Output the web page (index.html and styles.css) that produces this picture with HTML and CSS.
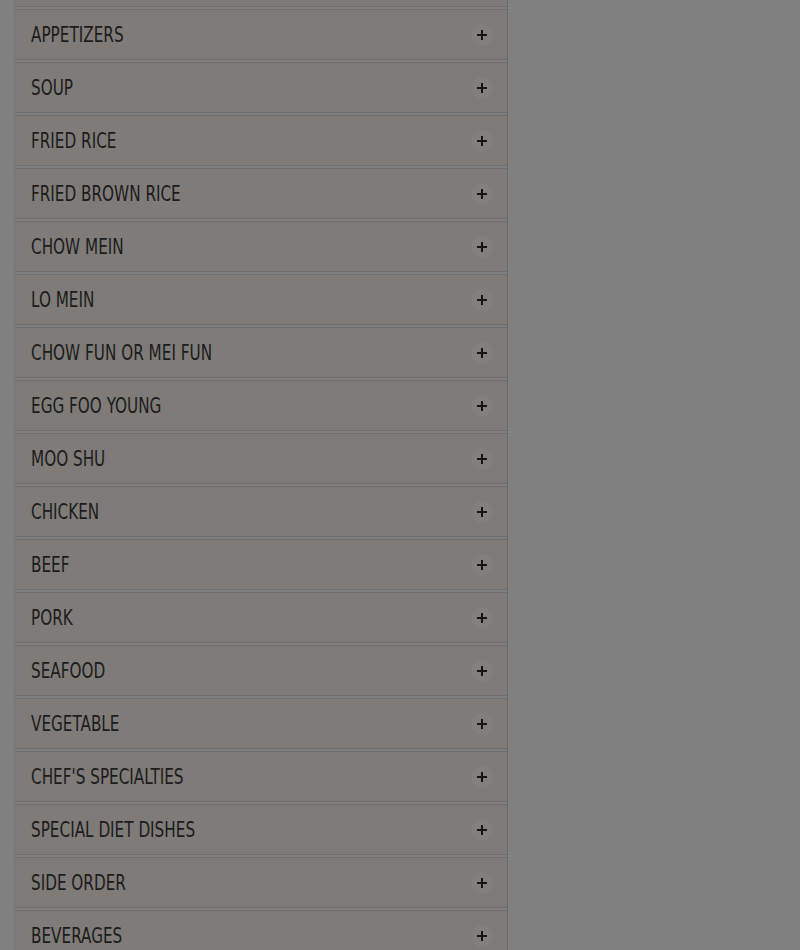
FILE: index.html
```html
<!DOCTYPE html>
<html>
<head>
<meta charset="utf-8">
<link rel="stylesheet" href="styles.css">
</head>
<body>
<div class="panel">
  <ul class="menu">
    <li class="item"><span class="label"></span><span class="plus"></span></li>
    <li class="item"><span class="label">APPETIZERS</span><span class="plus"></span></li>
    <li class="item"><span class="label">SOUP</span><span class="plus"></span></li>
    <li class="item"><span class="label">FRIED RICE</span><span class="plus"></span></li>
    <li class="item"><span class="label">FRIED BROWN RICE</span><span class="plus"></span></li>
    <li class="item"><span class="label">CHOW MEIN</span><span class="plus"></span></li>
    <li class="item"><span class="label">LO MEIN</span><span class="plus"></span></li>
    <li class="item"><span class="label">CHOW FUN OR MEI FUN</span><span class="plus"></span></li>
    <li class="item"><span class="label">EGG FOO YOUNG</span><span class="plus"></span></li>
    <li class="item"><span class="label">MOO SHU</span><span class="plus"></span></li>
    <li class="item"><span class="label">CHICKEN</span><span class="plus"></span></li>
    <li class="item"><span class="label">BEEF</span><span class="plus"></span></li>
    <li class="item"><span class="label">PORK</span><span class="plus"></span></li>
    <li class="item"><span class="label">SEAFOOD</span><span class="plus"></span></li>
    <li class="item"><span class="label">VEGETABLE</span><span class="plus"></span></li>
    <li class="item"><span class="label">CHEF'S SPECIALTIES</span><span class="plus"></span></li>
    <li class="item"><span class="label">SPECIAL DIET DISHES</span><span class="plus"></span></li>
    <li class="item"><span class="label">SIDE ORDER</span><span class="plus"></span></li>
    <li class="item"><span class="label">BEVERAGES</span><span class="plus"></span></li>
  </ul>
</div>
</body>
</html>
```
FILE: styles.css
```css
html, body {
  margin: 0;
  padding: 0;
  background: #808080;
  height: 950px;
  overflow: hidden;
}
.panel {
  margin-left: 14px;
  width: 492px;
  border-left: 1px solid #767676;
  border-right: 1px solid #6c6c6c;
  min-height: 1100px;
}
.menu {
  list-style: none;
  margin: -44px 0 0 0;
  padding: 0;
  display: flex;
  flex-direction: column;
  gap: 2px;
}
.item {
  box-sizing: border-box;
  height: 51px;
  background: #7e7b78;
  border-top: 1px solid #6f6f6f;
  border-bottom: 1px solid #6f6f6f;
  display: flex;
  align-items: center;
  justify-content: space-between;
  padding: 0 14px 0 16px;
}
.label {
  font-family: "DejaVu Sans Condensed", "Liberation Sans", sans-serif;
  font-stretch: condensed;
  font-size: 22px;
  color: #1c1c1c;
  display: inline-block;
  transform: scaleX(0.77);
  transform-origin: left center;
  white-space: nowrap;
}
.plus {
  position: relative;
  width: 22px;
  height: 22px;
  border-radius: 50%;
  background: #837f7c;
}
.plus::before, .plus::after {
  content: "";
  position: absolute;
  background: #151515;
  left: 50%;
  top: 50%;
  transform: translate(-50%, -50%);
}
.plus::before {
  width: 10px;
  height: 2px;
}
.plus::after {
  width: 2px;
  height: 10px;
}
```
